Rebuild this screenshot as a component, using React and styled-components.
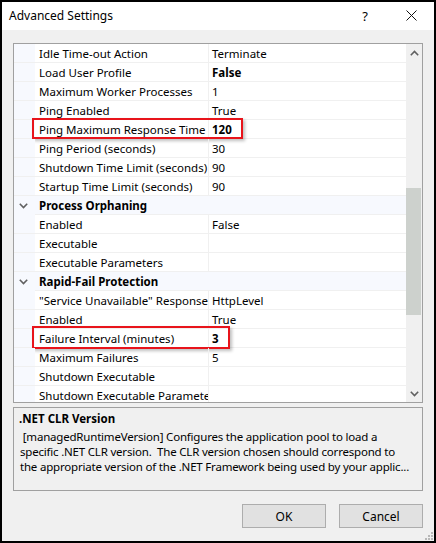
import React from 'react'
import styled, { createGlobalStyle } from 'styled-components'

const GlobalStyle = createGlobalStyle`
  body {
    margin: 0;
    background: #ffffff;
    font-family: "Noto Sans", "Open Sans", sans-serif;
  }
`

const groups = [
  {
    title: null,
    rows: [
      { name: 'Idle Time-out Action', value: 'Terminate' },
      { name: 'Load User Profile', value: 'False', bold: true },
      { name: 'Maximum Worker Processes', value: '1' },
      { name: 'Ping Enabled', value: 'True' },
      { name: 'Ping Maximum Response Time (seconds)', value: '120', bold: true, mark: 'wide' },
      { name: 'Ping Period (seconds)', value: '30' },
      { name: 'Shutdown Time Limit (seconds)', value: '90' },
      { name: 'Startup Time Limit (seconds)', value: '90' },
    ],
  },
  {
    title: 'Process Orphaning',
    rows: [
      { name: 'Enabled', value: 'False' },
      { name: 'Executable', value: '' },
      { name: 'Executable Parameters', value: '' },
    ],
  },
  {
    title: 'Rapid-Fail Protection',
    rows: [
      { name: '"Service Unavailable" Response Type', value: 'HttpLevel' },
      { name: 'Enabled', value: 'True' },
      { name: 'Failure Interval (minutes)', value: '3', bold: true, mark: 'narrow' },
      { name: 'Maximum Failures', value: '5' },
      { name: 'Shutdown Executable', value: '' },
      { name: 'Shutdown Executable Parameters', value: '' },
    ],
  },
]

function Chevron({ up }) {
  return (
    <svg width="9" height="6" viewBox="0 0 9 6">
      <path
        d={up ? 'M0.8 5.2 L4.5 1.5 L8.2 5.2' : 'M0.8 0.8 L4.5 4.5 L8.2 0.8'}
        fill="none"
        stroke="#606060"
        strokeWidth="1.6"
      />
    </svg>
  )
}

function App() {
  return (
    <>
      <GlobalStyle />
      <Window>
        <TitleBar>
          <Title>Advanced Settings</Title>
          <Help>?</Help>
          <Close>
            <svg width="11" height="11" viewBox="0 0 11 11">
              <path d="M0.5 0.5 L10.5 10.5 M10.5 0.5 L0.5 10.5" stroke="#111" strokeWidth="1" />
            </svg>
          </Close>
        </TitleBar>

        <Body>
          <Grid>
            <Rows>
              {groups.map((g, gi) => (
                <React.Fragment key={gi}>
                  {g.title && (
                    <CategoryRow>
                      <Gutter>
                        <Chevron />
                      </Gutter>
                      <CategoryName>{g.title}</CategoryName>
                    </CategoryRow>
                  )}
                  {g.rows.map((r, ri) => (
                    <Row key={ri}>
                      <Gutter />
                      <Name>{r.name}</Name>
                      <Value $bold={r.bold}>{r.value}</Value>
                      {r.mark && <Highlight $variant={r.mark} />}
                    </Row>
                  ))}
                </React.Fragment>
              ))}
            </Rows>
            <ScrollBar>
              <Arrow>
                <Chevron up />
              </Arrow>
              <Track>
                <Thumb />
              </Track>
              <Arrow>
                <Chevron />
              </Arrow>
            </ScrollBar>
          </Grid>

          <Description>
            <DescTitle>.NET CLR Version</DescTitle>
            <DescLine>&nbsp;[managedRuntimeVersion] Configures the application pool to load a</DescLine>
            <DescLine>specific .NET CLR version.&nbsp; The CLR version chosen should correspond to</DescLine>
            <DescLine>the appropriate version of the .NET Framework being used by your applic...</DescLine>
          </Description>

          <Buttons>
            <Button>OK</Button>
            <Button>Cancel</Button>
          </Buttons>
        </Body>

        <Grip>
          <svg width="8" height="8" viewBox="0 0 8 8">
            {[[6, 0], [6, 3], [3, 3], [6, 6], [3, 6], [0, 6]].map(([x, y], i) => (
              <rect key={i} x={x} y={y} width="2" height="2" fill="#b8b8b8" />
            ))}
          </svg>
        </Grip>
      </Window>
    </>
  )
}

export default App

const Window = styled.div`
  position: relative;
  width: 436px;
  height: 543px;
  box-sizing: border-box;
  border: 2px solid #000;
  display: flex;
  flex-direction: column;
  background: #f0f0f0;
  font-size: 11.5px;
  color: #000;
`

const TitleBar = styled.div`
  height: 28px;
  flex: none;
  background: #fff;
  display: flex;
  align-items: center;
  padding-left: 7px;
`

const Title = styled.div`
  flex: 1;
  font-size: 12px;
  margin-top: -1px;
`

const Help = styled.div`
  width: 46px;
  text-align: center;
  font-size: 13px;
  margin-top: -1px;
`

const Close = styled.div`
  width: 46px;
  display: flex;
  justify-content: center;
  margin-top: -2px;
`

const Body = styled.div`
  flex: 1;
  display: flex;
  flex-direction: column;
  padding: 13px 11px 0 11px;
`

const Grid = styled.div`
  height: 360px;
  box-sizing: border-box;
  border: 1px solid #a0a0a0;
  background: #fff;
  display: flex;
  overflow: hidden;
`

const Rows = styled.div`
  flex: 1;
  display: flex;
  flex-direction: column;
  overflow: hidden;
`

const Row = styled.div`
  position: relative;
  flex: none;
  height: 19px;
  box-sizing: border-box;
  border-bottom: 1px solid #f0f0f0;
  display: grid;
  grid-template-columns: 21px 174px 1fr;
  align-items: stretch;
`

const CategoryRow = styled.div`
  flex: none;
  height: 19px;
  box-sizing: border-box;
  border-bottom: 1px solid #f0f0f0;
  background: #f7f9fe;
  display: grid;
  grid-template-columns: 21px 1fr;
  align-items: stretch;
`

const Gutter = styled.div`
  background: #f7f9fe;
  display: flex;
  align-items: center;
  justify-content: center;
  padding-right: 3px;
`

const Name = styled.div`
  padding: 1px 0 0 4px;
  white-space: nowrap;
  overflow: hidden;
  line-height: 18px;
  border-right: 1px solid #f0f0f0;
`

const CategoryName = styled.div`
  padding: 1px 0 0 4px;
  font-weight: bold;
  line-height: 18px;
`

const Value = styled.div`
  padding: 1px 0 0 3px;
  white-space: nowrap;
  overflow: hidden;
  line-height: 18px;
  font-weight: ${p => (p.$bold ? 'bold' : 'normal')};
`

const Highlight = styled.div`
  position: absolute;
  left: 18px;
  top: ${p => (p.$variant === 'wide' ? '-2px' : '-3px')};
  width: ${p => (p.$variant === 'wide' ? '211px' : '198px')};
  height: ${p => (p.$variant === 'wide' ? '21px' : '23px')};
  box-sizing: border-box;
  border: 2px solid #e8141b;
  box-shadow: 2px 2px 3px rgba(0, 0, 0, 0.25);
  pointer-events: none;
`

const ScrollBar = styled.div`
  width: 16px;
  flex: none;
  background: #f0f0f0;
  display: flex;
  flex-direction: column;
`

const Arrow = styled.div`
  height: 17px;
  display: flex;
  align-items: center;
  justify-content: center;
`

const Track = styled.div`
  flex: 1;
  position: relative;
`

const Thumb = styled.div`
  position: absolute;
  left: 0;
  right: 1px;
  top: 127px;
  height: 127px;
  background: #cdd1cd;
`

const Description = styled.div`
  margin-top: 4px;
  height: 84px;
  box-sizing: border-box;
  border: 1px solid #a0a0a0;
  padding: 3px 5px 0 5px;
`

const DescTitle = styled.div`
  font-weight: bold;
  line-height: 16px;
  margin-bottom: 2px;
`

const DescLine = styled.div`
  line-height: 15px;
  white-space: nowrap;
  padding-left: 1px;
  letter-spacing: -0.2px;
`

const Buttons = styled.div`
  margin-top: 13px;
  display: flex;
  justify-content: flex-end;
  gap: 13px;
`

const Button = styled.button`
  width: 84px;
  height: 24px;
  box-sizing: border-box;
  border: 1px solid #adadad;
  background: #e1e1e1;
  font-family: inherit;
  font-size: 12px;
  color: #000;
  padding: 0;
`

const Grip = styled.div`
  position: absolute;
  right: 1px;
  bottom: 1px;
  line-height: 0;
`
